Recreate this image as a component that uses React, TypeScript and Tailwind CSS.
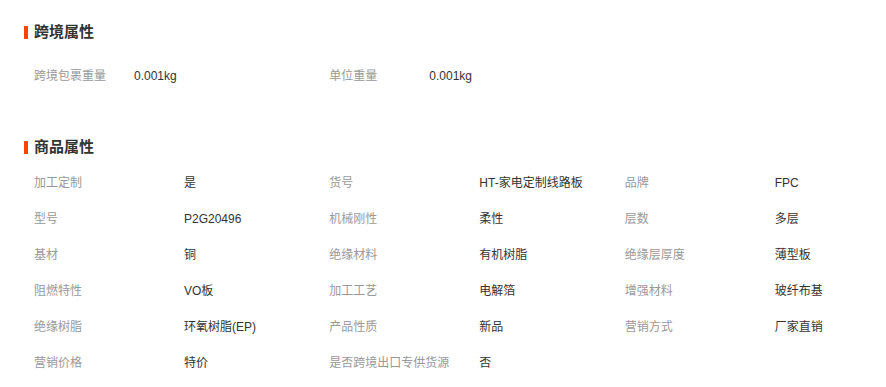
import React from "react";

const font = { fontFamily: '"Liberation Sans", "Noto Sans CJK SC", sans-serif' };

const cross: [string, string][] = [
  ["跨境包裹重量", "0.001kg"],
  ["单位重量", "0.001kg"],
];

const attrs: [string, string][] = [
  ["加工定制", "是"],
  ["货号", "HT-家电定制线路板"],
  ["品牌", "FPC"],
  ["型号", "P2G20496"],
  ["机械刚性", "柔性"],
  ["层数", "多层"],
  ["基材", "铜"],
  ["绝缘材料", "有机树脂"],
  ["绝缘层厚度", "薄型板"],
  ["阻燃特性", "VO板"],
  ["加工工艺", "电解箔"],
  ["增强材料", "玻纤布基"],
  ["绝缘树脂", "环氧树脂(EP)"],
  ["产品性质", "新品"],
  ["营销方式", "厂家直销"],
  ["营销价格", "特价"],
  ["是否跨境出口专供货源", "否"],
];

function Heading({ title }: { title: string }) {
  return (
    <div className="flex items-center h-[20px] pl-[24px]">
      <span className="w-[4px] h-[13px] bg-[#ff4400] mr-[6px]" />
      <span className="text-[15px] font-bold text-[#333] leading-[20px]">{title}</span>
    </div>
  );
}

export default function App() {
  return (
    <div className="w-[886px] h-[387px] bg-white overflow-hidden text-[12px]" style={font}>
      <div className="pt-[22px]">
        <Heading title="跨境属性" />
      </div>
      <div className="grid grid-cols-3 mt-[16px]">
        {cross.map(([k, v]) => (
          <div key={k} className="flex items-center h-[36px] pl-[34px]">
            <span className="w-[100px] text-[#999] whitespace-nowrap">{k}</span>
            <span className="text-[#333] whitespace-nowrap">{v}</span>
          </div>
        ))}
      </div>
      <div className="mt-[43px]">
        <Heading title="商品属性" />
      </div>
      <div className="grid grid-cols-3 mt-[8px]">
        {attrs.map(([k, v]) => (
          <div key={k} className="flex items-center h-[36px] pl-[34px]">
            <span className="w-[150px] shrink-0 text-[#999] whitespace-nowrap">{k}</span>
            <span className="text-[#333] whitespace-nowrap">{v}</span>
          </div>
        ))}
      </div>
    </div>
  );
}
